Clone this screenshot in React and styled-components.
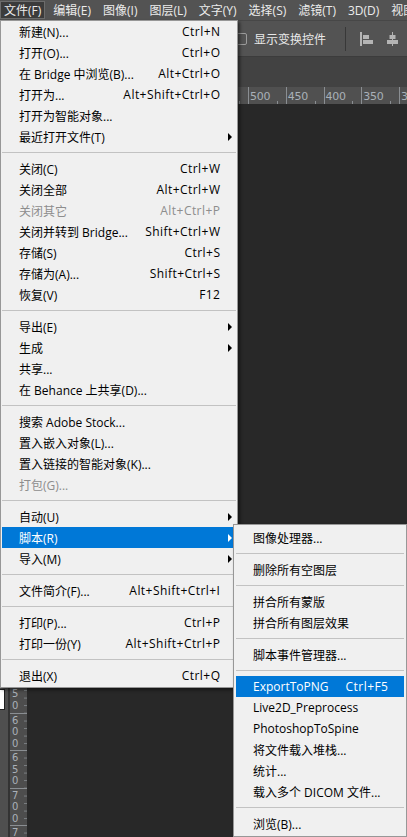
import React from "react";
import styled, { createGlobalStyle } from "styled-components";

const GlobalStyle = createGlobalStyle`
  html, body {
    margin: 0;
    padding: 0;
    background: #282828;
  }
  body {
    font-family: "Open Sans", "Noto Sans CJK SC", sans-serif;
  }
`;

const Screen = styled.div`
  position: relative;
  width: 407px;
  height: 837px;
  overflow: hidden;
  background: #282828;
  display: flex;
  flex-direction: column;
`;

// 상단 메뉴바
const MenuBar = styled.div`
  flex: none;
  height: 20px;
  background: #535353;
  display: flex;
  align-items: center;
  gap: 4px;
`;
const BarItem = styled.div`
  height: 18px;
  box-sizing: border-box;
  padding: 0 3px;
  display: flex;
  align-items: center;
  font-size: 12px;
  color: #ececec;
  white-space: nowrap;
  border: 1px solid ${(p) => (p.$active ? "#6c6c6c" : "transparent")};
  background: ${(p) => (p.$active ? "#3b3b3b" : "transparent")};
`;

const OptionsBar = styled.div`
  flex: none;
  height: 37px;
  box-sizing: border-box;
  background: #535353;
  border-top: 1px solid #474747;
  border-bottom: 1px solid #3c3c3c;
  display: flex;
  align-items: center;
  padding-left: 235px;
`;
const Check = styled.span`
  width: 12px;
  height: 12px;
  box-sizing: border-box;
  border: 1px solid #9c9c9c;
  border-radius: 2px;
  margin-right: 7px;
`;
const OptionLabel = styled.span`
  font-size: 12px;
  color: #e8e8e8;
  white-space: nowrap;
`;
const VDivider = styled.span`
  width: 1px;
  height: 24px;
  background: #383838;
  margin: 0 14px 0 19px;
`;
const IconSlot = styled.span`
  display: flex;
  margin-right: ${(p) => p.$gap || 0}px;
`;

const TabStrip = styled.div`
  flex: none;
  height: 30px;
  background: #424242;
`;

const Workspace = styled.div`
  flex: 1;
  display: flex;
  min-height: 0;
`;
const Toolbar = styled.div`
  width: 8px;
  flex: none;
  background: #4f4f4f;
  border-right: 2px solid #333;
  display: flex;
  flex-direction: column;
`;
const Swatch = styled.div`
  margin-top: 602px;
  margin-left: -1px;
  width: 4px;
  height: 19px;
  background: #fff;
  border: 1px solid #1e1e1e;
`;
const DocArea = styled.div`
  flex: 1;
  display: flex;
  flex-direction: column;
  min-width: 0;
`;
const RulerRow = styled.div`
  flex: none;
  height: 17px;
  display: flex;
  background: #505050;
`;
const Corner = styled.div`
  width: 17px;
  flex: none;
`;
const HRuler = styled.div`
  flex: 1;
  display: flex;
  overflow: hidden;
`;
const HSegment = styled.div`
  flex: none;
  width: ${(p) => p.$w}px;
  box-sizing: border-box;
  border-left: ${(p) => (p.$lead ? "none" : "1px solid #8a8e92")};
  display: flex;
  align-items: flex-end;
`;
const HLabel = styled.span`
  align-self: center;
  margin: 2px 0 0 1px;
  font-size: 11px;
  line-height: 11px;
  color: #a9b0b8;
  font-family: "DejaVu Sans", sans-serif;
  letter-spacing: -0.3px;
`;
const HTick = styled.span`
  margin: 0 8px 0 auto;
  width: 1px;
  height: 3px;
  background: #8a8e92;
`;

const CanvasRow = styled.div`
  flex: 1;
  display: flex;
  min-height: 0;
`;
const VRuler = styled.div`
  width: 17px;
  flex: none;
  background: #4d4d4d;
  display: flex;
  flex-direction: column;
  overflow: hidden;
`;
const VSegment = styled.div`
  flex: none;
  height: ${(p) => p.$h}px;
  box-sizing: border-box;
  border-top: ${(p) => (p.$lead ? "none" : "1px solid #8a8e92")};
  display: flex;
`;
const VDigits = styled.div`
  width: 13px;
  padding: 1px 0 0 2px;
  box-sizing: border-box;
  display: flex;
  flex-direction: column;
  font-family: "DejaVu Sans", sans-serif;
  font-size: 10px;
  line-height: 11.5px;
  color: #a9b0b8;
`;
const VTicks = styled.div`
  flex: 1;
  background: repeating-linear-gradient(
    to bottom,
    transparent 0 7px,
    #7c8084 7px 8px,
    transparent 8px 7.5px
  );
  background-size: 3px 7.53px;
  background-repeat: repeat-y;
  background-position: right 0;
`;
const Canvas = styled.div`
  flex: 1;
  background: #282828;
`;

// 드롭다운 메뉴
const MenuPanel = styled.div`
  position: absolute;
  top: ${(p) => p.$top}px;
  left: ${(p) => p.$left}px;
  width: ${(p) => p.$width}px;
  box-sizing: border-box;
  background: #f0f0f0;
  border: 1px solid #979797;
  padding: ${(p) => p.$pad};
  box-shadow: 2px 2px 3px rgba(0, 0, 0, 0.5);
  font-size: 12px;
  z-index: ${(p) => p.$z || 1};
`;
const Row = styled.div`
  position: relative;
  height: 21px;
  display: flex;
  align-items: center;
  justify-content: space-between;
  padding: 0 16px 0 17px;
  white-space: nowrap;
  color: ${(p) => (p.$active ? "#fff" : p.$disabled ? "#8d8d8d" : "#000")};
  background: ${(p) => (p.$active ? "#0078d7" : "transparent")};
`;
const Shortcut = styled.span`
  letter-spacing: 0.45px;
  margin-right: -0.45px;
`;
const Arrow = styled.span`
  position: absolute;
  right: 4px;
  top: 7px;
  border-left: 4px solid ${(p) => (p.$light ? "#fff" : "#000")};
  border-top: 4px solid transparent;
  border-bottom: 4px solid transparent;
`;
const Sep = styled.div`
  height: 1px;
  margin: 5px 0;
  background: #c2c2c2;
`;

const fileMenu = [
  [
    { label: "新建(N)...", key: "Ctrl+N" },
    { label: "打开(O)...", key: "Ctrl+O" },
    { label: "在 Bridge 中浏览(B)...", key: "Alt+Ctrl+O" },
    { label: "打开为...", key: "Alt+Shift+Ctrl+O" },
    { label: "打开为智能对象..." },
    { label: "最近打开文件(T)", sub: true },
  ],
  [
    { label: "关闭(C)", key: "Ctrl+W" },
    { label: "关闭全部", key: "Alt+Ctrl+W" },
    { label: "关闭其它", key: "Alt+Ctrl+P", disabled: true },
    { label: "关闭并转到 Bridge...", key: "Shift+Ctrl+W" },
    { label: "存储(S)", key: "Ctrl+S" },
    { label: "存储为(A)...", key: "Shift+Ctrl+S" },
    { label: "恢复(V)", key: "F12" },
  ],
  [
    { label: "导出(E)", sub: true },
    { label: "生成", sub: true },
    { label: "共享..." },
    { label: "在 Behance 上共享(D)..." },
  ],
  [
    { label: "搜索 Adobe Stock..." },
    { label: "置入嵌入对象(L)..." },
    { label: "置入链接的智能对象(K)..." },
    { label: "打包(G)...", disabled: true },
  ],
  [
    { label: "自动(U)", sub: true },
    { label: "脚本(R)", sub: true, active: true },
    { label: "导入(M)", sub: true },
  ],
  [{ label: "文件简介(F)...", key: "Alt+Shift+Ctrl+I" }],
  [
    { label: "打印(P)...", key: "Ctrl+P" },
    { label: "打印一份(Y)", key: "Alt+Shift+Ctrl+P" },
  ],
  [{ label: "退出(X)", key: "Ctrl+Q" }],
];

const scriptMenu = [
  [{ label: "图像处理器..." }],
  [{ label: "删除所有空图层" }],
  [{ label: "拼合所有蒙版" }, { label: "拼合所有图层效果" }],
  [{ label: "脚本事件管理器..." }],
  [
    { label: "ExportToPNG", key: "Ctrl+F5", active: true },
    { label: "Live2D_Preprocess" },
    { label: "PhotoshopToSpine" },
    { label: "将文件载入堆栈..." },
    { label: "统计..." },
    { label: "载入多个 DICOM 文件..." },
  ],
  [{ label: "浏览(B)..." }],
];

const barItems = ["文件(F)", "编辑(E)", "图像(I)", "图层(L)", "文字(Y)", "选择(S)", "滤镜(T)", "3D(D)", "视图"];

// 메뉴에 가려지는 눈금은 숫자 없이 선만 그린다
const hLabels = [750, 700, 650, 600, 550, 500, 450, 400, 350, 300];
const vLabels = [];
for (let v = -200; v <= 800; v += 50) vLabels.push(v);

const MenuGroups = ({ groups }) =>
  groups.map((group, gi) => (
    <React.Fragment key={gi}>
      {gi > 0 && <Sep />}
      {group.map((item) => (
        <Row key={item.label} $active={item.active} $disabled={item.disabled}>
          <span>{item.label}</span>
          {item.key && <Shortcut>{item.key}</Shortcut>}
          {item.sub && <Arrow $light={item.active} />}
        </Row>
      ))}
    </React.Fragment>
  ));

const AlignLeftIcon = () => (
  <svg width="13" height="14" viewBox="0 0 13 14">
    <rect x="0" y="0" width="2" height="14" fill="#b4b4b4" />
    <rect x="3" y="3" width="6" height="4" fill="#b4b4b4" />
    <rect x="3" y="8" width="10" height="4" fill="#b4b4b4" />
  </svg>
);
const AlignCenterIcon = () => (
  <svg width="11" height="14" viewBox="0 0 11 14">
    <rect x="5" y="0" width="1" height="14" fill="#b4b4b4" />
    <rect x="2.5" y="3" width="6" height="4" fill="#b4b4b4" />
    <rect x="0" y="8" width="11" height="4" fill="#b4b4b4" />
  </svg>
);

export default function App() {
  return (
    <Screen>
      <GlobalStyle />
      <MenuBar>
        {barItems.map((t, i) => (
          <BarItem key={t} $active={i === 0}>
            {t}
          </BarItem>
        ))}
      </MenuBar>
      <OptionsBar>
        <Check />
        <OptionLabel>显示变换控件</OptionLabel>
        <VDivider />
        <IconSlot $gap={14}>
          <AlignLeftIcon />
        </IconSlot>
        <IconSlot>
          <AlignCenterIcon />
        </IconSlot>
      </OptionsBar>
      <TabStrip />
      <Workspace>
        <Toolbar>
          <Swatch />
        </Toolbar>
        <DocArea>
          <RulerRow>
            <Corner />
            <HRuler>
              <HSegment $lead $w={32.25} />
              {hLabels.map((n) => (
                <HSegment key={n} $w={37.75}>
                  {n <= 500 && <HLabel>{n}</HLabel>}
                  <HTick />
                </HSegment>
              ))}
            </HRuler>
          </RulerRow>
          <CanvasRow>
            <VRuler>
              <VSegment $lead $h={6} />
              {vLabels.map((n) => (
                <VSegment key={n} $h={37.67}>
                  <VDigits>
                    {n >= 550 &&
                      String(n)
                        .split("")
                        .map((d, i) => <span key={i}>{d}</span>)}
                  </VDigits>
                  <VTicks />
                </VSegment>
              ))}
            </VRuler>
            <Canvas />
          </CanvasRow>
        </DocArea>
      </Workspace>

      <MenuPanel $top={20} $left={0} $width={238} $pad="0 1px 1px">
        <MenuGroups groups={fileMenu} />
      </MenuPanel>
      <MenuPanel $top={524} $left={233} $width={174} $pad="2px" $z={2}>
        <MenuGroups groups={scriptMenu} />
      </MenuPanel>
    </Screen>
  );
}
